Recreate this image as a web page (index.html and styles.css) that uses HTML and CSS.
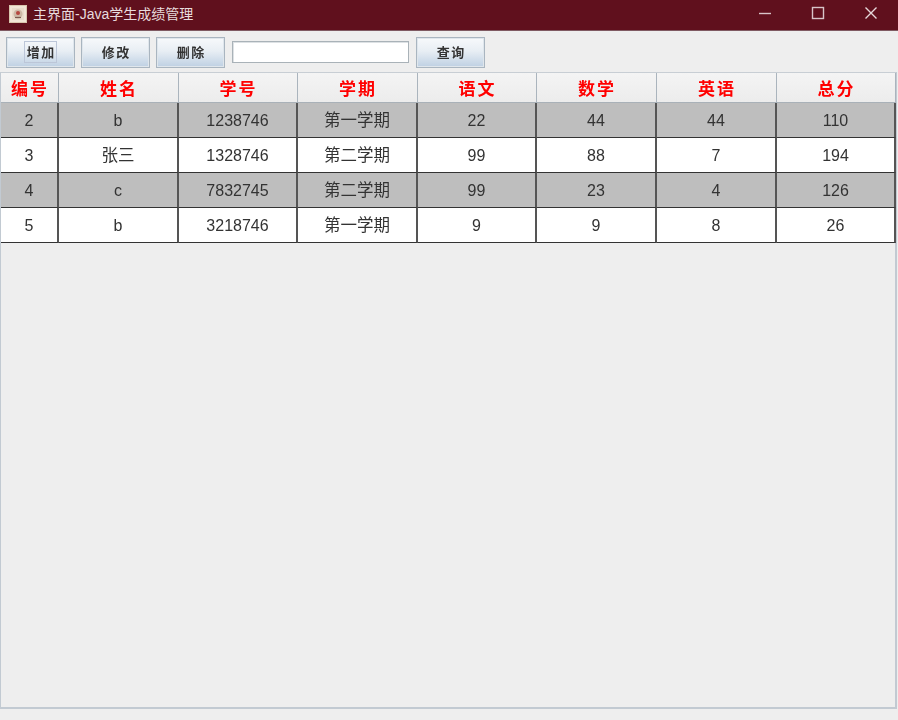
FILE: index.html
```html
<!DOCTYPE html>
<html lang="zh">
<head>
<meta charset="utf-8">
<title>主界面-Java学生成绩管理</title>
<link rel="stylesheet" href="styles.css">
</head>
<body>
<div class="window">
  <header class="titlebar">
    <div class="app-icon">
      <svg width="18" height="18" viewBox="0 0 18 18">
        <rect x="0.5" y="0.5" width="17" height="17" fill="#f1e6d6" stroke="#d9c6ae"/>
        <rect x="3" y="3" width="12" height="12" fill="#e9dccb"/>
        <circle cx="9" cy="9" r="4.5" fill="#cdb9a6"/>
        <circle cx="9" cy="8" r="2" fill="#b5483f"/>
        <path d="M6 12.5h6" stroke="#7c5a4e" stroke-width="1.2"/>
      </svg>
    </div>
    <span class="title">主界面-Java学生成绩管理</span>
    <div class="win-controls">
      <span class="win-btn"><svg width="14" height="14" viewBox="0 0 14 14"><path d="M1 7.5h12" stroke="#d8c4c8" stroke-width="1.4"/></svg></span>
      <span class="win-btn"><svg width="14" height="14" viewBox="0 0 14 14"><rect x="1.5" y="1.5" width="11" height="11" fill="none" stroke="#d8c4c8" stroke-width="1.4"/></svg></span>
      <span class="win-btn"><svg width="14" height="14" viewBox="0 0 14 14"><path d="M1.5 1.5l11 11M12.5 1.5l-11 11" stroke="#e6d8da" stroke-width="1.4"/></svg></span>
    </div>
  </header>
  <div class="toolbar">
    <button class="btn btn-focus"><span>增加</span></button>
    <button class="btn"><span>修改</span></button>
    <button class="btn"><span>删除</span></button>
    <input class="search" type="text">
    <button class="btn btn-query"><span>查询</span></button>
  </div>
  <main class="panel">
    <table class="grid">
      <colgroup>
        <col class="c0"><col class="c1"><col class="c2"><col class="c3">
        <col class="c4"><col class="c5"><col class="c6"><col class="c7">
      </colgroup>
      <thead>
        <tr><th>编号</th><th>姓名</th><th>学号</th><th>学期</th><th>语文</th><th>数学</th><th>英语</th><th>总分</th></tr>
      </thead>
      <tbody>
        <tr class="alt"><td>2</td><td>b</td><td>1238746</td><td class="cjk">第一学期</td><td>22</td><td>44</td><td>44</td><td>110</td></tr>
        <tr><td>3</td><td class="cjk">张三</td><td>1328746</td><td class="cjk">第二学期</td><td>99</td><td>88</td><td>7</td><td>194</td></tr>
        <tr class="alt"><td>4</td><td>c</td><td>7832745</td><td class="cjk">第二学期</td><td>99</td><td>23</td><td>4</td><td>126</td></tr>
        <tr><td>5</td><td>b</td><td>3218746</td><td class="cjk">第一学期</td><td>9</td><td>9</td><td>8</td><td>26</td></tr>
      </tbody>
    </table>
  </main>
</div>
</body>
</html>
```
FILE: styles.css
```css
* { box-sizing: border-box; }
html, body { margin: 0; padding: 0; }
body {
  width: 898px;
  height: 720px;
  overflow: hidden;
  background: #eeeeee;
  font-family: "Liberation Sans", "Noto Sans CJK SC", sans-serif;
}
.window {
  width: 898px;
  height: 720px;
  display: flex;
  flex-direction: column;
  filter: blur(0.7px);
}
.titlebar {
  height: 31px;
  flex: none;
  background: #60101d;
  display: flex;
  align-items: center;
  padding-left: 9px;
  color: #e8dcde;
  border-bottom: 1px solid #7f5a62;
}
.app-icon { width: 18px; height: 18px; margin-right: 6px; margin-top: -2px; }
.app-icon svg { display: block; }
.title { font-size: 14px; margin-top: -4px; }
.win-controls { margin-left: auto; display: flex; margin-top: -5px; padding-right: 1px; }
.win-btn { width: 53px; display: flex; justify-content: center; }
.win-btn svg { display: block; }
.toolbar {
  height: 41px;
  flex: none;
  display: flex;
  align-items: flex-start;
  padding: 6px 0 0 6px;
}
.btn {
  width: 69px;
  height: 31px;
  margin-right: 6px;
  padding: 0 0 2px;
  border: 1px solid #a9b5c0;
  box-shadow: inset 0 0 0 1px #dfe6ec;
  background: linear-gradient(to bottom, #f7f9fb 0%, #e8eef4 45%, #bed0e3 100%);
  color: #333333;
  font-family: "Noto Sans CJK SC", sans-serif;
  font-size: 13px;
  font-weight: 700;
  letter-spacing: 1.5px;
  line-height: 20px;
}
.btn span { display: inline-block; padding: 0 0 0 1.5px; }
.btn-focus span { outline: 1px solid #bcc6d8; }
.search {
  width: 177px;
  height: 22px;
  margin: 4px 7px 0 1px;
  padding: 0;
  background: #ffffff;
  border: 1px solid #a9b2b8;
  box-shadow: inset 1px 1px 0 #dde1e4;
  outline: none;
}
.panel {
  width: 897px;
  height: 637px;
  flex: none;
  border: 2px solid #c2cad2;
  border-left-width: 1px;
  border-top-width: 1px;
  border-top-color: #c8ced4;
}
.grid {
  table-layout: fixed;
  border-collapse: separate;
  border-spacing: 0;
  width: 895px;
}
.c0 { width: 58px; }
.c1 { width: 120px; }
.c2 { width: 119px; }
.c3 { width: 120px; }
.c4 { width: 119px; }
.c5 { width: 120px; }
.c6 { width: 120px; }
.c7 { width: 119px; }
th {
  height: 30px;
  padding: 0 0 0 1px;
  background: linear-gradient(to bottom, #f4f4f4, #ececec);
  color: #ff0000;
  font-family: "Noto Sans CJK SC", sans-serif;
  font-size: 17px;
  font-weight: 700;
  letter-spacing: 2px;
  text-align: center;
  border-right: 1px solid #aab4bd;
  border-bottom: 1px solid #a9b1b8;
  line-height: 28px;
}
td {
  height: 35px;
  padding: 1px 0 0;
  background: #ffffff;
  color: #333333;
  font-size: 16px;
  font-family: "Liberation Sans", sans-serif;
  text-align: center;
  border-right: 2px solid #555555;
  border-bottom: 1.5px solid #333333;
}
td.cjk {
  font-family: "Noto Sans CJK SC", sans-serif;
  font-size: 16.5px;
  line-height: 28px;
  padding: 0 0 2px;
}
.alt td { background: #bebebe; }
```
